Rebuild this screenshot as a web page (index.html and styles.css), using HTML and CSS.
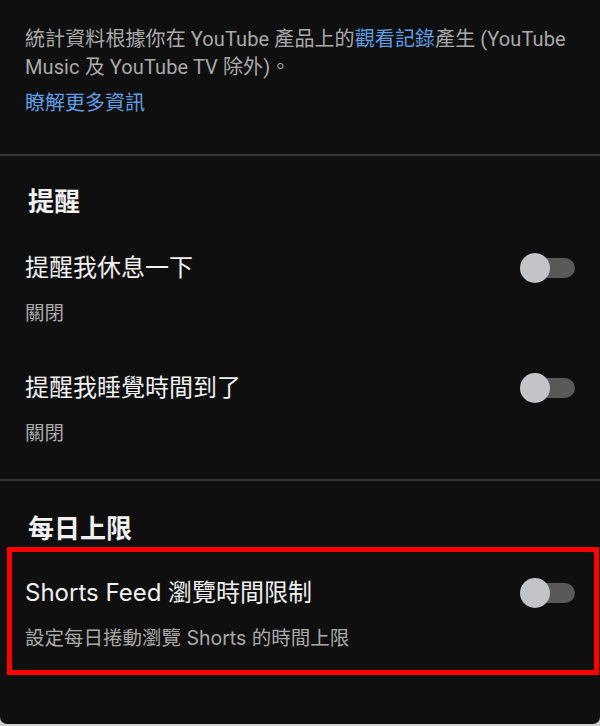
FILE: index.html
```html
<!DOCTYPE html>
<html lang="zh-Hant">
<head>
<meta charset="utf-8">
<title>提醒與每日上限</title>
<link rel="stylesheet" href="styles.css">
</head>
<body>
<div class="page">
  <section class="intro">
    <p class="desc">統計資料根據你在 YouTube 產品上的<span class="link">觀看記錄</span>產生 (YouTube Music 及 YouTube TV 除外)。</p>
    <p class="more link">瞭解更多資訊</p>
  </section>
  <hr class="divider">
  <section class="group">
    <h2 class="heading">提醒</h2>
    <div class="row">
      <div class="texts">
        <div class="title">提醒我休息一下</div>
        <div class="sub">關閉</div>
      </div>
      <div class="toggle"><span class="track"></span><span class="knob"></span></div>
    </div>
    <div class="row">
      <div class="texts">
        <div class="title">提醒我睡覺時間到了</div>
        <div class="sub">關閉</div>
      </div>
      <div class="toggle"><span class="track"></span><span class="knob"></span></div>
    </div>
  </section>
  <hr class="divider">
  <section class="group last">
    <h2 class="heading heading-tight">每日上限</h2>
    <div class="highlight">
      <div class="row row-hl">
        <div class="texts">
          <div class="title">Shorts Feed 瀏覽時間限制</div>
          <div class="sub">設定每日捲動瀏覽 Shorts 的時間上限</div>
        </div>
        <div class="toggle"><span class="track"></span><span class="knob"></span></div>
      </div>
    </div>
  </section>
</div>
</body>
</html>
```

FILE: styles.css
```css
* { box-sizing: border-box; }
html { background: #cfcfcf; }
body {
  margin: 0;
  font-family: Roboto, "Noto Sans CJK TC", sans-serif;
}
.page {
  height: 724px;
  background: #0f0f0f;
  border-radius: 0 0 7px 7px;
  overflow: hidden;
  color: #f1f1f1;
}
.intro {
  padding: 25px 25px 37px;
}
.desc {
  margin: 0;
  font-size: 20px;
  line-height: 28px;
  color: #aaaaaa;
  letter-spacing: 0.1px;
}
.link { color: #5e9fe6; }
.more {
  margin: 8px 0 0;
  font-size: 20px;
  line-height: 28px;
}
.divider {
  margin: 0;
  border: 0;
  height: 2px;
  background: #363636;
}
.group {
  padding: 30px 0 3px;
}
.group.last { padding-top: 32px; }
.heading {
  margin: 0 0 18px;
  padding-left: 28px;
  font-size: 26px;
  line-height: 32px;
  font-weight: 700;
  color: #f1f1f1;
}
.heading-tight { margin-bottom: 2px; }
.row {
  display: flex;
  justify-content: space-between;
  align-items: flex-start;
  padding: 16px 25px 30px 25px;
}
.title {
  font-family: Inter, "Noto Sans CJK TC", sans-serif;
  font-size: 24px;
  line-height: 32px;
  color: #f1f1f1;
}
.sub {
  font-family: Inter, "Noto Sans CJK TC", sans-serif;
  margin-top: 16px;
  font-size: 19.5px;
  line-height: 26px;
  color: #aaaaaa;
}
.toggle {
  position: relative;
  width: 55px;
  height: 30px;
  margin-top: 1px;
  flex: none;
}
.track {
  position: absolute;
  left: 8px;
  right: 0;
  top: 5px;
  height: 20px;
  border-radius: 10px;
  background: #595959;
}
.knob {
  position: absolute;
  left: 0;
  top: 0;
  width: 30px;
  height: 30px;
  border-radius: 50%;
  background: #c2c4c9;
}
.highlight {
  margin: 0 1px 0 7px;
  border: 5px solid #ff0000;
}
.row-hl {
  padding: 25px 19px 19px 13px;
}
```
